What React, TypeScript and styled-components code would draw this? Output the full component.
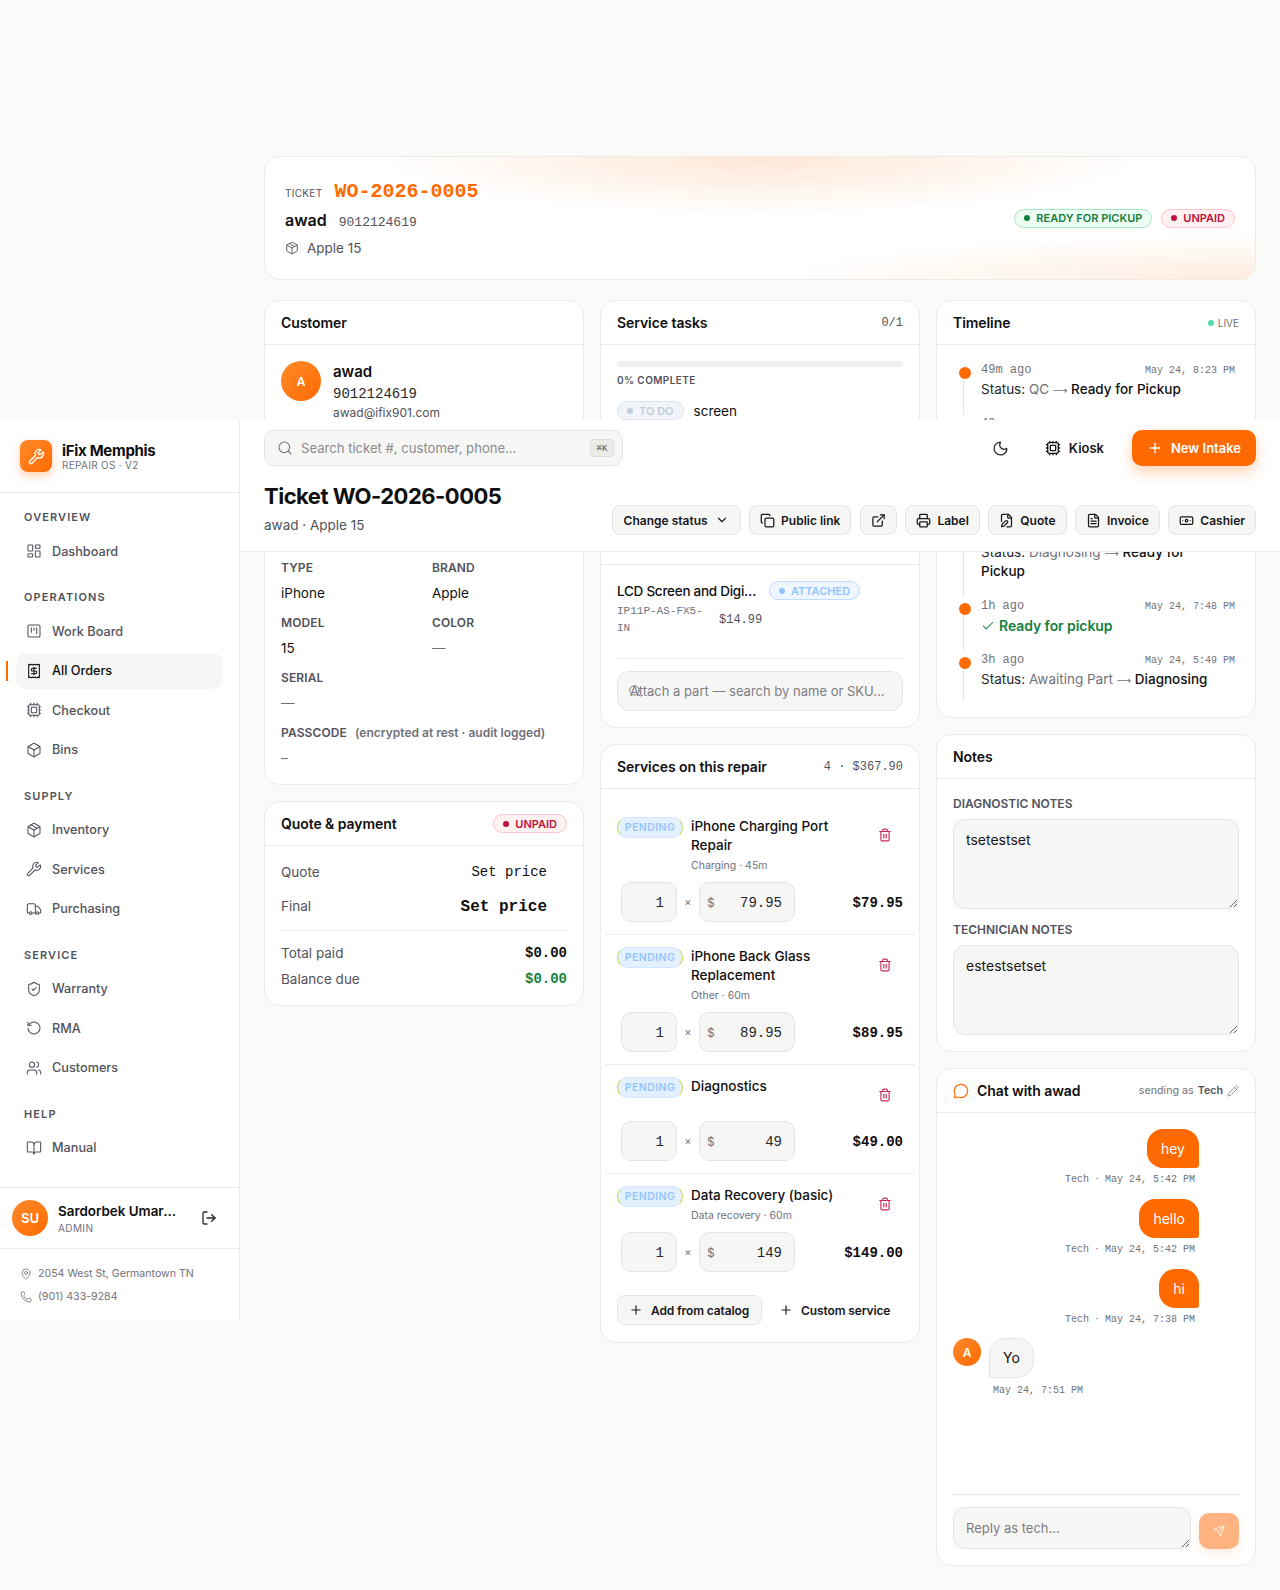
import React from "react";
import styled, { createGlobalStyle } from "styled-components";
import {
  Banknote,
  BookOpen,
  Box,
  Check,
  ChevronDown,
  Copy,
  Cpu,
  ExternalLink,
  FilePen,
  FileText,
  LayoutDashboard,
  LogOut,
  MapPin,
  MessageCircle,
  Moon,
  Package,
  Pencil,
  Phone,
  Plus,
  Printer,
  Receipt,
  RotateCcw,
  Search,
  Send,
  ShieldCheck,
  SquareKanban,
  Trash2,
  Truck,
  Users,
  Wrench,
} from "lucide-react";

const MONO = `"Liberation Mono", monospace`;
const ORANGE = "#ff6a00";

const GlobalStyle = createGlobalStyle`
  * { box-sizing: border-box; }
  html, body { margin: 0; padding: 0; }
  body {
    background: #fafaf8;
    color: #0f0f10;
    font-family: Inter, "Liberation Sans", sans-serif;
    font-size: 13.5px;
  }
`;

const Page = styled.div`
  position: relative;
  width: 1280px;
  height: 1590px;
  overflow: hidden;
`;

/* ---------- sidebar ---------- */

const Sidebar = styled.aside`
  position: absolute;
  top: 420px;
  left: 0;
  width: 240px;
  height: 900px;
  background: #fff;
  border-right: 1px solid #ebebe8;
  display: flex;
  flex-direction: column;
  z-index: 3;
`;

const Brand = styled.div`
  height: 73px;
  flex: none;
  border-bottom: 1px solid #ebebe8;
  display: flex;
  align-items: center;
  gap: 10px;
  padding: 0 20px;
`;

const LogoTile = styled.div`
  width: 32px;
  height: 32px;
  border-radius: 8px;
  background: linear-gradient(135deg, #ff8a2b, ${ORANGE});
  box-shadow: 0 4px 10px rgba(255, 106, 0, 0.3);
  color: #fff;
  display: flex;
  align-items: center;
  justify-content: center;
`;

const BrandName = styled.div`
  font-size: 15px;
  font-weight: 700;
  letter-spacing: -0.02em;
  line-height: 17px;
  margin-top: 2px;
`;

const BrandSub = styled.div`
  font-size: 10px;
  color: #71717a;
  letter-spacing: 0.03em;
  line-height: 13px;
`;

const Nav = styled.nav`
  padding: 16px 16px 0;
  display: flex;
  flex-direction: column;
  gap: 20px;
`;

const NavGroup = styled.div`
  display: flex;
  flex-direction: column;
`;

const NavLabel = styled.div`
  font-size: 11px;
  font-weight: 600;
  line-height: 16px;
  letter-spacing: 0.1em;
  color: #52525b;
  padding-left: 8px;
  margin-bottom: 8px;
`;

const NavItems = styled.div`
  display: flex;
  flex-direction: column;
  gap: 3.5px;
`;

const NavLink = styled.a<{ $active?: boolean }>`
  position: relative;
  height: 36px;
  border-radius: 10px;
  display: flex;
  align-items: center;
  gap: 10px;
  padding-left: 10px;
  font-size: 12.7px;
  font-weight: 500;
  color: ${(p) => (p.$active ? "#0f0f10" : "#52525b")};
  background: ${(p) => (p.$active ? "#f6f6f4" : "transparent")};
  ${(p) =>
    p.$active &&
    `&::before {
      content: "";
      position: absolute;
      left: -10px;
      top: 8px;
      width: 2px;
      height: 20px;
      background: ${ORANGE};
    }`}
`;

const UserRow = styled.div`
  margin-top: auto;
  height: 62px;
  border-top: 1px solid #ebebe8;
  border-bottom: 1px solid #ebebe8;
  display: flex;
  align-items: center;
  padding: 0 12px;
  gap: 10px;
`;

const Avatar = styled.div<{ $size: number; $font: number }>`
  width: ${(p) => p.$size}px;
  height: ${(p) => p.$size}px;
  flex: none;
  border-radius: 50%;
  background: linear-gradient(135deg, #ff8a2b, ${ORANGE});
  color: #fff;
  font-size: ${(p) => p.$font}px;
  font-weight: 600;
  display: flex;
  align-items: center;
  justify-content: center;
`;

const UserText = styled.div`
  width: 120px;
`;

const UserName = styled.div`
  font-size: 13.4px;
  font-weight: 600;
  line-height: 18px;
  margin-top: 1px;
  white-space: nowrap;
  overflow: hidden;
  text-overflow: ellipsis;
`;

const UserRole = styled.div`
  font-size: 10px;
  line-height: 14px;
  color: #71717a;
  letter-spacing: 0.04em;
  margin-top: 1px;
`;

const LogoutBtn = styled.div`
  margin-left: 13px;
  display: flex;
  color: #27272a;
`;

const ShopInfo = styled.div`
  height: 71px;
  flex: none;
  padding: 17px 20px 0;
  display: flex;
  flex-direction: column;
  gap: 7px;
`;

const ShopLine = styled.div`
  display: flex;
  align-items: center;
  gap: 6px;
  font-size: 10.6px;
  line-height: 16px;
  color: #71717a;
`;

/* ---------- sticky top header ---------- */

const Topbar = styled.header`
  position: absolute;
  top: 420px;
  left: 240px;
  right: 0;
  height: 132px;
  background: #fff;
  border-bottom: 1px solid #ebebe8;
  padding: 10px 24px 0;
  z-index: 2;
`;

const TopRow = styled.div`
  display: flex;
  align-items: center;
  justify-content: space-between;
  height: 36px;
  margin-bottom: 15px;
`;

const SearchBox = styled.div`
  width: 359px;
  height: 36px;
  border-radius: 10px;
  background: #f6f6f4;
  border: 1px solid #e4e4e1;
  display: flex;
  align-items: center;
  padding: 0 8px 0 12px;
  gap: 8px;
  color: #71717a;
`;

const SearchText = styled.span`
  flex: 1;
  font-size: 13.1px;
  color: #8a8a91;
`;

const Kbd = styled.span`
  width: 24px;
  height: 18px;
  border-radius: 4px;
  background: #ebebe8;
  border: 1px solid #dddddb;
  font-family: ${MONO};
  font-size: 9px;
  color: #52525b;
  display: flex;
  align-items: center;
  justify-content: center;
`;

const TopActions = styled.div`
  display: flex;
  align-items: center;
  gap: 14px;
`;

const IconGhost = styled.div`
  width: 36px;
  height: 36px;
  display: flex;
  align-items: center;
  justify-content: center;
  color: #27272a;
`;

const GhostBtn = styled.div`
  height: 36px;
  padding: 0 14px 0 12px;
  display: flex;
  align-items: center;
  gap: 8px;
  font-size: 13px;
  font-weight: 600;
  color: #18181b;
`;

const PrimaryBtn = styled.div`
  width: 124px;
  height: 36px;
  border-radius: 10px;
  background: ${ORANGE};
  color: #fff;
  font-size: 13px;
  font-weight: 600;
  display: flex;
  align-items: center;
  justify-content: center;
  gap: 8px;
  box-shadow: 0 6px 14px rgba(255, 106, 0, 0.3);
`;

const TitleRow = styled.div`
  display: flex;
  align-items: flex-end;
  justify-content: space-between;
`;

const PageTitle = styled.h1`
  margin: 0;
  font-size: 22px;
  line-height: 30px;
  font-weight: 700;
  letter-spacing: -0.023em;
`;

const PageSub = styled.div`
  margin-top: 4px;
  line-height: 20px;
  color: #52525b;
`;

const ActionRow = styled.div`
  display: flex;
  gap: 8.5px;
`;

const ActionBtn = styled.div`
  height: 30px;
  padding: 0 10px;
  border-radius: 8px;
  background: #f6f6f4;
  border: 1px solid #e4e4e1;
  display: flex;
  align-items: center;
  gap: 6px;
  font-size: 12px;
  font-weight: 600;
  color: #18181b;
  white-space: nowrap;
`;

const StatusBtn = styled(ActionBtn)`
  padding: 0 11px;
  gap: 7px;
`;

/* ---------- main flow ---------- */

const Main = styled.main`
  padding: 156px 24px 24px 264px;
`;

const Hero = styled.section`
  height: 124px;
  border: 1px solid #ebebe8;
  border-radius: 16px;
  background:
    radial-gradient(380px 58px at 50% 0%, rgba(255, 106, 0, 0.16), transparent),
    radial-gradient(480px 44px at 100% 100%, rgba(255, 106, 0, 0.13), transparent),
    #fff;
  padding: 24px 20px 0;
  display: flex;
  align-items: center;
  justify-content: space-between;
`;

const HeroInfo = styled.div`
  margin-top: -24px;
`;

const HeroTicket = styled.div`
  display: flex;
  align-items: center;
  gap: 12px;
  height: 24px;
`;

const TicketLabel = styled.span`
  font-size: 10px;
  color: #52525b;
  letter-spacing: 0.03em;
  margin-top: 6px;
`;

const TicketNo = styled.span`
  font-family: ${MONO};
  font-size: 20px;
  font-weight: 700;
  color: ${ORANGE};
  margin-top: 2px;
`;

const HeroName = styled.div`
  display: flex;
  align-items: baseline;
  gap: 12px;
  margin-top: 8px;
  height: 24px;
`;

const HeroCustomer = styled.span`
  font-size: 16px;
  font-weight: 600;
`;

const MonoGray = styled.span<{ $size?: number }>`
  font-family: ${MONO};
  font-size: ${(p) => p.$size ?? 13}px;
  color: #52525b;
`;

const HeroDevice = styled.div`
  display: flex;
  align-items: center;
  gap: 8px;
  margin-top: 4px;
  color: #52525b;
  height: 20px;
`;

const Badges = styled.div`
  display: flex;
  gap: 9px;
  margin-top: -24px;
`;

const tones = {
  green: { bg: "#ecfdf3", line: "#a7e8c4", ink: "#15803d" },
  red: { bg: "#fff1f2", line: "#fdc3cf", ink: "#be123c" },
  blue: { bg: "#eff6ff", line: "#bfdbfe", ink: "#93c5fd" },
  slate: { bg: "#f1f5f9", line: "#dbe3ec", ink: "#c3ccd8" },
};

const Chip = styled.span<{ $tone: keyof typeof tones }>`
  height: 19px;
  flex: none;
  padding: 0 9px;
  border-radius: 999px;
  background: ${(p) => tones[p.$tone].bg};
  border: 1px solid ${(p) => tones[p.$tone].line};
  color: ${(p) => tones[p.$tone].ink};
  font-size: 11px;
  font-weight: 600;
  display: inline-flex;
  align-items: center;
  gap: 6px;
  white-space: nowrap;
  &::before {
    content: "";
    width: 6px;
    height: 6px;
    border-radius: 50%;
    background: currentColor;
  }
`;

const Columns = styled.div`
  margin-top: 20px;
  display: grid;
  grid-template-columns: repeat(3, 320px);
  gap: 16px;
  align-items: start;
`;

const Column = styled.div`
  display: flex;
  flex-direction: column;
  gap: 16px;
`;

const Card = styled.section`
  background: #fff;
  border: 1px solid #ebebe8;
  border-radius: 16px;
`;

const CardHead = styled.div`
  height: 44px;
  padding: 0 16px;
  border-bottom: 1px solid #ebebe8;
  display: flex;
  align-items: center;
  justify-content: space-between;
`;

const CardTitle = styled.h2`
  margin: 0;
  font-size: 14px;
  font-weight: 600;
  letter-spacing: -0.005em;
  display: flex;
  align-items: center;
  gap: 8px;
`;

const CardBody = styled.div`
  padding: 16px;
`;

const CustomerTop = styled.div`
  display: flex;
  gap: 12px;
  min-height: 199px;
  align-items: flex-start;
`;

const CustomerName = styled.div`
  font-size: 15px;
  font-weight: 600;
  line-height: 22px;
`;

const CustomerPhone = styled.div`
  font-family: ${MONO};
  font-size: 14px;
  line-height: 22px;
  color: #27272a;
`;

const CustomerMail = styled.div`
  font-size: 12px;
  line-height: 16px;
  color: #52525b;
`;

const DeviceGrid = styled.dl`
  margin: 0 0 1px;
  display: grid;
  grid-template-columns: 1fr 1fr;
  column-gap: 16px;
  row-gap: 13px;
`;

const DeviceCell = styled.div<{ $wide?: boolean }>`
  grid-column: ${(p) => (p.$wide ? "1 / -1" : "auto")};
`;

const FieldLabel = styled.dt`
  font-size: 12px;
  font-weight: 600;
  line-height: 16px;
  color: #52525b;
  letter-spacing: 0.01em;
`;

const LabelHint = styled.span`
  margin-left: 8px;
  color: #71717a;
  letter-spacing: 0;
`;

const FieldValue = styled.dd<{ $muted?: boolean }>`
  margin: 8px 0 0;
  line-height: 18px;
  color: ${(p) => (p.$muted ? "#71717a" : "#0f0f10")};
`;

const PayRow = styled.div<{ $gap?: number }>`
  display: flex;
  align-items: center;
  justify-content: space-between;
  line-height: 20px;
  margin-bottom: ${(p) => p.$gap ?? 0}px;
  color: #52525b;
`;

const PriceLink = styled.span<{ $big?: boolean }>`
  font-family: ${MONO};
  font-size: ${(p) => (p.$big ? 16 : 14)}px;
  font-weight: ${(p) => (p.$big ? 700 : 400)};
  line-height: ${(p) => (p.$big ? 18 : 20)}px;
  color: #0f0f10;
  padding-right: 20px;
  padding-top: ${(p) => (p.$big ? 2 : 0)}px;
`;

const PayDivider = styled.hr`
  border: 0;
  border-top: 1px solid #ebebe8;
  margin: 14px 0 12px;
`;

const PayAmount = styled.span<{ $green?: boolean }>`
  font-family: ${MONO};
  font-size: 14px;
  font-weight: 700;
  color: ${(p) => (p.$green ? "#15803d" : "#0f0f10")};
`;

const TaskSection = styled.div`
  min-height: 220px;
  padding: 16px;
  border-bottom: 1px solid #ebebe8;
`;

const Progress = styled.div`
  height: 6px;
  border-radius: 3px;
  background: #efefed;
`;

const ProgressText = styled.div`
  margin-top: 6px;
  font-size: 10px;
  font-weight: 600;
  line-height: 14px;
  letter-spacing: 0.04em;
  color: #52525b;
`;

const TaskRow = styled.div`
  margin-top: 14px;
  display: flex;
  align-items: center;
  gap: 10px;
`;

const PartSection = styled.div`
  padding: 16px 16px 16px;
`;

const PartInfo = styled.div`
  padding-bottom: 21px;
  border-bottom: 1px solid #ebebe8;
`;

const PartTop = styled.div`
  display: flex;
  align-items: center;
  gap: 10px;
`;

const PartName = styled.div`
  width: 142px;
  font-weight: 500;
  letter-spacing: -0.02em;
  white-space: nowrap;
  overflow: hidden;
  text-overflow: ellipsis;
`;

const PartMeta = styled.div`
  display: flex;
  align-items: center;
  gap: 12px;
  margin-top: 3px;
`;

const PartSku = styled.div`
  width: 90px;
  font-family: ${MONO};
  font-size: 11px;
  line-height: 17px;
  color: #71717a;
`;

const PartSearch = styled.div`
  position: relative;
  margin-top: 12px;
  color: #71717a;
  svg {
    position: absolute;
    left: 11px;
    top: 13px;
  }
`;

const TextInput = styled.input`
  width: 100%;
  height: 40px;
  padding: 0 12px;
  border-radius: 12px;
  border: 1px solid #e4e4e1;
  background: #f6f6f4;
  font: inherit;
  font-size: 13px;
  text-overflow: ellipsis;
  &::placeholder {
    color: #7d7d85;
    opacity: 1;
  }
`;

const ListHeadMeta = styled.span`
  font-family: ${MONO};
  font-size: 12px;
  color: #52525b;
  white-space: pre;
`;

const ServiceList = styled.div`
  padding: 16px 4px 0;
`;

const ServiceRow = styled.div`
  padding: 12px 12px;
  border-bottom: 1px solid #ebebe8;
  &:last-child {
    border-bottom: 0;
  }
`;

const ServiceHead = styled.div`
  display: flex;
  align-items: flex-start;
  gap: 8px;
`;

const PendingPill = styled.span`
  flex: none;
  width: 66px;
  height: 21px;
  border-radius: 11px;
  background: #e3f0ff;
  border: 1px solid;
  border-color: #d3e5ff #c3d94e;
  color: #93c5fd;
  font-size: 10.5px;
  font-weight: 600;
  letter-spacing: 0.04em;
  display: flex;
  align-items: center;
  justify-content: center;
`;

const ServiceText = styled.div`
  flex: 1;
`;

const ServiceName = styled.div`
  font-weight: 500;
  line-height: 19px;
`;

const ServiceMeta = styled.div`
  margin-top: 3px;
  font-size: 10.5px;
  line-height: 16px;
  color: #71717a;
`;

const TrashBtn = styled.div`
  flex: none;
  width: 28px;
  height: 28px;
  margin: 4px 4px 4px 0;
  display: flex;
  align-items: center;
  justify-content: center;
  color: #c92a5a;
`;

const PriceLine = styled.div`
  margin-top: 8px;
  padding: 0 0 0 4px;
  display: flex;
  align-items: center;
`;

const QtyField = styled.div`
  width: 56px;
  height: 40px;
  border-radius: 10px;
  background: #f6f6f4;
  border: 1px solid #e4e4e1;
  font-family: ${MONO};
  font-size: 14px;
  color: #27272a;
  display: flex;
  align-items: center;
  justify-content: flex-end;
  padding: 2px 12px 0 0;
`;

const Times = styled.span`
  width: 22px;
  text-align: center;
  font-size: 11px;
  color: #71717a;
`;

const RateField = styled(QtyField)`
  width: 96px;
  justify-content: space-between;
  padding-left: 7px;
`;

const Dollar = styled.span`
  font-size: 12px;
  color: #71717a;
  font-family: Inter, sans-serif;
  margin-top: -2px;
`;

const LineTotal = styled.span`
  margin-left: auto;
  padding-top: 2px;
  font-family: ${MONO};
  font-size: 14px;
  font-weight: 700;
`;

const ServiceActions = styled.div`
  display: flex;
  gap: 5px;
  padding: 0 16px 17px;
  margin-top: 11px;
`;

const AddBtn = styled(ActionBtn)<{ $ghost?: boolean }>`
  padding: 0 12px 0 11px;
  gap: 8px;
  letter-spacing: -0.01em;
  background: ${(p) => (p.$ghost ? "transparent" : "#f6f6f4")};
  border-color: ${(p) => (p.$ghost ? "transparent" : "#e4e4e1")};
`;

const LiveTag = styled.span`
  display: flex;
  align-items: center;
  gap: 4px;
  font-size: 10px;
  color: #71717a;
  &::before {
    content: "";
    width: 6px;
    height: 6px;
    border-radius: 50%;
    background: #4fdcae;
  }
`;

const TimelineItem = styled.div<{ $height?: number }>`
  display: flex;
  gap: 10px;
  min-height: ${(p) => p.$height ?? 0}px;
`;

const Rail = styled.div`
  flex: none;
  width: 12px;
  margin-left: 6px;
  padding-top: 6px;
  display: flex;
  flex-direction: column;
`;

const RailDot = styled.span`
  width: 12px;
  height: 12px;
  border-radius: 50%;
  background: ${ORANGE};
  flex: none;
`;

const RailLine = styled.span`
  flex: 1;
  width: 1px;
  margin-left: 4px;
  background: #e4e4e1;
`;

const EventBody = styled.div<{ $last?: boolean }>`
  flex: 1;
  margin-right: 4px;
  padding-top: 1px;
  padding-bottom: ${(p) => (p.$last ? 12 : 16)}px;
`;

const EventTop = styled.div`
  display: flex;
  align-items: center;
  justify-content: space-between;
  height: 16px;
`;

const EventAgo = styled.span`
  font-family: ${MONO};
  font-size: 12px;
  color: #71717a;
`;

const EventDate = styled.span`
  font-family: ${MONO};
  font-size: 10px;
  color: #71717a;
`;

const EventText = styled.div`
  margin-top: 2px;
  max-width: 248px;
  line-height: 19px;
  color: #27272a;
`;

const Faded = styled.span`
  color: #71717a;
`;

const Arrow = styled.span`
  font-family: "DejaVu Sans", sans-serif;
  font-size: 10px;
  line-height: 10px;
  color: #71717a;
`;

const Strong = styled.span`
  color: #0f0f10;
  font-weight: 500;
`;

const EventOk = styled.div`
  margin-top: 2px;
  display: flex;
  align-items: center;
  gap: 4px;
  line-height: 19px;
  font-size: 14px;
  font-weight: 600;
  letter-spacing: -0.005em;
  color: #15803d;
`;

const NoteLabel = styled.label`
  display: block;
  font-size: 12px;
  font-weight: 600;
  line-height: 16px;
  color: #52525b;
  margin-bottom: 7px;
`;

const NoteArea = styled.textarea<{ $h?: number; $size?: number }>`
  display: block;
  width: 100%;
  height: ${(p) => p.$h ?? 90}px;
  padding: 10px 12px;
  border-radius: 12px;
  border: 1px solid #e4e4e1;
  background: #f6f6f4;
  color: #18181b;
  font: inherit;
  font-size: ${(p) => p.$size ?? 14}px;
  line-height: 20px;
  resize: vertical;
  &::placeholder {
    color: #7d7d85;
    opacity: 1;
  }
`;

const NotesBody = styled(CardBody)`
  padding-top: 17px;
`;

const NoteBlock = styled.div`
  & + & {
    margin-top: 13px;
  }
`;

const SendingAs = styled.span`
  display: flex;
  align-items: center;
  gap: 4px;
  font-size: 10.7px;
  color: #71717a;
  b {
    font-weight: 600;
    color: #52525b;
  }
`;

const Thread = styled.div`
  height: 381px;
  padding: 16px 16px 0;
  display: flex;
  flex-direction: column;
`;

const MineMsg = styled.div`
  display: flex;
  flex-direction: column;
  align-items: flex-end;
  padding-right: 40px;
  margin-bottom: 12px;
`;

const MineBubble = styled.div`
  padding: 10px 14px;
  font-size: 14px;
  line-height: 19px;
  background: ${ORANGE};
  color: #fff;
  border-radius: 16px 16px 3px 16px;
`;

const MsgMeta = styled.div`
  margin-top: 5px;
  padding-right: 4px;
  font-family: ${MONO};
  font-size: 10px;
  line-height: 14px;
  height: 14px;
  color: #71717a;
  white-space: pre;
`;

const MetaDot = styled.span`
  display: inline-block;
  width: 16px;
  text-align: center;
  line-height: 10px;
  font-family: Inter, sans-serif;
`;

const TheirMsg = styled.div`
  display: flex;
  gap: 8px;
  margin-top: -1px;
`;

const TheirBubble = styled.div`
  padding: 10px 13px;
  font-size: 14px;
  line-height: 18px;
  background: #f6f6f4;
  border: 1px solid #e4e4e1;
  border-radius: 16px 16px 16px 3px;
  width: fit-content;
`;

const TheirMeta = styled(MsgMeta)`
  margin-top: 6px;
  padding: 0 0 0 4px;
`;

const Composer = styled.div`
  margin: 0 16px;
  padding: 12px 0 16px;
  border-top: 1px solid #e4e4e1;
  display: flex;
  align-items: flex-end;
  gap: 8px;
`;

const SendBtn = styled.div`
  width: 40px;
  height: 36px;
  flex: none;
  border-radius: 10px;
  background: #ffb380;
  color: #fff;
  display: flex;
  align-items: center;
  justify-content: center;
  box-shadow: 0 4px 10px rgba(255, 106, 0, 0.12);
`;

const navGroups = [
  { label: "OVERVIEW", items: [{ name: "Dashboard", icon: LayoutDashboard }] },
  {
    label: "OPERATIONS",
    items: [
      { name: "Work Board", icon: SquareKanban },
      { name: "All Orders", icon: Receipt, active: true },
      { name: "Checkout", icon: Cpu },
      { name: "Bins", icon: Box },
    ],
  },
  {
    label: "SUPPLY",
    items: [
      { name: "Inventory", icon: Package },
      { name: "Services", icon: Wrench },
      { name: "Purchasing", icon: Truck },
    ],
  },
  {
    label: "SERVICE",
    items: [
      { name: "Warranty", icon: ShieldCheck },
      { name: "RMA", icon: RotateCcw },
      { name: "Customers", icon: Users },
    ],
  },
  { label: "HELP", items: [{ name: "Manual", icon: BookOpen }] },
];

const services = [
  { name: "iPhone Charging Port Repair", meta: "Charging · 45m", qty: 1, rate: "79.95", total: "$79.95" },
  { name: "iPhone Back Glass Replacement", meta: "Other · 60m", qty: 1, rate: "89.95", total: "$89.95" },
  { name: "Diagnostics", meta: "", qty: 1, rate: "49", total: "$49.00" },
  { name: "Data Recovery (basic)", meta: "Data recovery · 60m", qty: 1, rate: "149", total: "$149.00" },
];

const myMessages = [
  { text: "hey", date: "May 24, 5:42 PM" },
  { text: "hello", date: "May 24, 5:42 PM" },
  { text: "hi", date: "May 24, 7:38 PM" },
];

export default function App() {
  return (
    <Page>
      <GlobalStyle />

      <Sidebar>
        <Brand>
          <LogoTile>
            <Wrench size={17} strokeWidth={2} />
          </LogoTile>
          <div>
            <BrandName>iFix Memphis</BrandName>
            <BrandSub>REPAIR OS · V2</BrandSub>
          </div>
        </Brand>
        <Nav>
          {navGroups.map((group) => (
            <NavGroup key={group.label}>
              <NavLabel>{group.label}</NavLabel>
              <NavItems>
                {group.items.map((item: any) => (
                  <NavLink key={item.name} $active={item.active}>
                    <item.icon size={16} strokeWidth={1.6} />
                    {item.name}
                  </NavLink>
                ))}
              </NavItems>
            </NavGroup>
          ))}
        </Nav>
        <UserRow>
          <Avatar $size={36} $font={13}>SU</Avatar>
          <UserText>
            <UserName>Sardorbek Umarov</UserName>
            <UserRole>ADMIN</UserRole>
          </UserText>
          <LogoutBtn>
            <LogOut size={16} />
          </LogoutBtn>
        </UserRow>
        <ShopInfo>
          <ShopLine>
            <MapPin size={12} strokeWidth={1.6} />
            2054 West St, Germantown TN
          </ShopLine>
          <ShopLine>
            <Phone size={12} strokeWidth={1.6} />
            (901) 433-9284
          </ShopLine>
        </ShopInfo>
      </Sidebar>

      <Topbar>
        <TopRow>
          <SearchBox>
            <Search size={16} strokeWidth={1.6} />
            <SearchText>Search ticket #, customer, phone…</SearchText>
            <Kbd>⌘K</Kbd>
          </SearchBox>
          <TopActions>
            <IconGhost>
              <Moon size={17} strokeWidth={1.8} />
            </IconGhost>
            <GhostBtn>
              <Cpu size={16} />
              Kiosk
            </GhostBtn>
            <PrimaryBtn>
              <Plus size={16} />
              New Intake
            </PrimaryBtn>
          </TopActions>
        </TopRow>
        <TitleRow>
          <div>
            <PageTitle>Ticket WO-2026-0005</PageTitle>
            <PageSub>awad · Apple 15</PageSub>
          </div>
          <ActionRow>
            <StatusBtn>
              Change status <ChevronDown size={14} />
            </StatusBtn>
            <ActionBtn>
              <Copy size={15} />
              Public link
            </ActionBtn>
            <ActionBtn>
              <ExternalLink size={15} />
            </ActionBtn>
            <ActionBtn>
              <Printer size={15} />
              Label
            </ActionBtn>
            <ActionBtn>
              <FilePen size={15} />
              Quote
            </ActionBtn>
            <ActionBtn>
              <FileText size={15} />
              Invoice
            </ActionBtn>
            <ActionBtn>
              <Banknote size={15} />
              Cashier
            </ActionBtn>
          </ActionRow>
        </TitleRow>
      </Topbar>

      <Main>
        <Hero>
          <HeroInfo>
            <HeroTicket>
              <TicketLabel>TICKET</TicketLabel>
              <TicketNo>WO-2026-0005</TicketNo>
            </HeroTicket>
            <HeroName>
              <HeroCustomer>awad</HeroCustomer>
              <MonoGray>9012124619</MonoGray>
            </HeroName>
            <HeroDevice>
              <Package size={14} strokeWidth={1.6} />
              Apple 15
            </HeroDevice>
          </HeroInfo>
          <Badges>
            <Chip $tone="green">READY FOR PICKUP</Chip>
            <Chip $tone="red">UNPAID</Chip>
          </Badges>
        </Hero>

        <Columns>
          <Column>
            <Card>
              <CardHead>
                <CardTitle>Customer</CardTitle>
              </CardHead>
              <CardBody>
                <CustomerTop>
                  <Avatar $size={40} $font={12}>A</Avatar>
                  <div>
                    <CustomerName>awad</CustomerName>
                    <CustomerPhone>9012124619</CustomerPhone>
                    <CustomerMail>awad@ifix901.com</CustomerMail>
                  </div>
                </CustomerTop>
                <DeviceGrid>
                  <DeviceCell>
                    <FieldLabel>TYPE</FieldLabel>
                    <FieldValue>iPhone</FieldValue>
                  </DeviceCell>
                  <DeviceCell>
                    <FieldLabel>BRAND</FieldLabel>
                    <FieldValue>Apple</FieldValue>
                  </DeviceCell>
                  <DeviceCell>
                    <FieldLabel>MODEL</FieldLabel>
                    <FieldValue>15</FieldValue>
                  </DeviceCell>
                  <DeviceCell>
                    <FieldLabel>COLOR</FieldLabel>
                    <FieldValue $muted>—</FieldValue>
                  </DeviceCell>
                  <DeviceCell $wide>
                    <FieldLabel>SERIAL</FieldLabel>
                    <FieldValue $muted>—</FieldValue>
                  </DeviceCell>
                  <DeviceCell $wide>
                    <FieldLabel>
                      PASSCODE<LabelHint>(encrypted at rest · audit logged)</LabelHint>
                    </FieldLabel>
                    <FieldValue $muted>–</FieldValue>
                  </DeviceCell>
                </DeviceGrid>
              </CardBody>
            </Card>

            <Card>
              <CardHead>
                <CardTitle>Quote &amp; payment</CardTitle>
                <Chip $tone="red">UNPAID</Chip>
              </CardHead>
              <CardBody>
                <PayRow $gap={14}>
                  Quote
                  <PriceLink>Set price</PriceLink>
                </PayRow>
                <PayRow>
                  Final
                  <PriceLink $big>Set price</PriceLink>
                </PayRow>
                <PayDivider />
                <PayRow $gap={6}>
                  Total paid
                  <PayAmount>$0.00</PayAmount>
                </PayRow>
                <PayRow>
                  Balance due
                  <PayAmount $green>$0.00</PayAmount>
                </PayRow>
              </CardBody>
            </Card>
          </Column>

          <Column>
            <Card>
              <CardHead>
                <CardTitle>Service tasks</CardTitle>
                <ListHeadMeta>0/1</ListHeadMeta>
              </CardHead>
              <TaskSection>
                <Progress />
                <ProgressText>0% COMPLETE</ProgressText>
                <TaskRow>
                  <Chip $tone="slate">TO DO</Chip>
                  screen
                </TaskRow>
              </TaskSection>
              <PartSection>
                <PartInfo>
                  <PartTop>
                    <PartName>LCD Screen and Digitizer</PartName>
                    <Chip $tone="blue">ATTACHED</Chip>
                  </PartTop>
                  <PartMeta>
                    <PartSku>IP11P-AS-FX5-IN</PartSku>
                    <MonoGray $size={12}>$14.99</MonoGray>
                  </PartMeta>
                </PartInfo>
                <PartSearch>
                  <TextInput placeholder="Attach a part — search by name or SKU…" />
                  <Search size={14} strokeWidth={1.6} />
                </PartSearch>
              </PartSection>
            </Card>

            <Card>
              <CardHead>
                <CardTitle>Services on this repair</CardTitle>
                <ListHeadMeta>4 · $367.90</ListHeadMeta>
              </CardHead>
              <ServiceList>
                {services.map((s) => (
                  <ServiceRow key={s.name}>
                    <ServiceHead>
                      <PendingPill>PENDING</PendingPill>
                      <ServiceText>
                        <ServiceName>{s.name}</ServiceName>
                        {s.meta && <ServiceMeta>{s.meta}</ServiceMeta>}
                      </ServiceText>
                      <TrashBtn>
                        <Trash2 size={14} />
                      </TrashBtn>
                    </ServiceHead>
                    <PriceLine>
                      <QtyField>{s.qty}</QtyField>
                      <Times>×</Times>
                      <RateField>
                        <Dollar>$</Dollar>
                        {s.rate}
                      </RateField>
                      <LineTotal>{s.total}</LineTotal>
                    </PriceLine>
                  </ServiceRow>
                ))}
              </ServiceList>
              <ServiceActions>
                <AddBtn>
                  <Plus size={14} />
                  Add from catalog
                </AddBtn>
                <AddBtn $ghost>
                  <Plus size={14} />
                  Custom service
                </AddBtn>
              </ServiceActions>
            </Card>
          </Column>

          <Column>
            <Card>
              <CardHead>
                <CardTitle>Timeline</CardTitle>
                <LiveTag>LIVE</LiveTag>
              </CardHead>
              <CardBody>
                <TimelineItem>
                  <Rail>
                    <RailDot />
                    <RailLine />
                  </Rail>
                  <EventBody>
                    <EventTop>
                      <EventAgo>49m ago</EventAgo>
                      <EventDate>May 24, 8:23 PM</EventDate>
                    </EventTop>
                    <EventText>
                      Status: <Faded>QC</Faded> <Arrow>⟶</Arrow> <Strong>Ready for Pickup</Strong>
                    </EventText>
                  </EventBody>
                </TimelineItem>
                <TimelineItem $height={109}>
                  <Rail>
                    <RailDot />
                    <RailLine />
                  </Rail>
                  <EventBody>
                    <EventTop>
                      <EventAgo>49m ago</EventAgo>
                      <EventDate>May 24, 8:23 PM</EventDate>
                    </EventTop>
                  </EventBody>
                </TimelineItem>
                <TimelineItem>
                  <Rail>
                    <RailDot />
                    <RailLine />
                  </Rail>
                  <EventBody>
                    <EventTop>
                      <EventAgo>1h ago</EventAgo>
                      <EventDate>May 24, 7:50 PM</EventDate>
                    </EventTop>
                    <EventText>
                      Status: <Faded>Diagnosing</Faded> <Arrow>⟶</Arrow> <Strong>Ready for Pickup</Strong>
                    </EventText>
                  </EventBody>
                </TimelineItem>
                <TimelineItem>
                  <Rail>
                    <RailDot />
                    <RailLine />
                  </Rail>
                  <EventBody>
                    <EventTop>
                      <EventAgo>1h ago</EventAgo>
                      <EventDate>May 24, 7:48 PM</EventDate>
                    </EventTop>
                    <EventOk>
                      <Check size={14} strokeWidth={1.8} />
                      Ready for pickup
                    </EventOk>
                  </EventBody>
                </TimelineItem>
                <TimelineItem>
                  <Rail>
                    <RailDot />
                    <RailLine />
                  </Rail>
                  <EventBody $last>
                    <EventTop>
                      <EventAgo>3h ago</EventAgo>
                      <EventDate>May 24, 5:49 PM</EventDate>
                    </EventTop>
                    <EventText>
                      Status: <Faded>Awaiting Part</Faded> <Arrow>⟶</Arrow> <Strong>Diagnosing</Strong>
                    </EventText>
                  </EventBody>
                </TimelineItem>
              </CardBody>
            </Card>

            <Card>
              <CardHead>
                <CardTitle>Notes</CardTitle>
              </CardHead>
              <NotesBody>
                <NoteBlock>
                  <NoteLabel>DIAGNOSTIC NOTES</NoteLabel>
                  <NoteArea defaultValue="tsetestset" />
                </NoteBlock>
                <NoteBlock>
                  <NoteLabel>TECHNICIAN NOTES</NoteLabel>
                  <NoteArea defaultValue="estestsetset" />
                </NoteBlock>
              </NotesBody>
            </Card>

            <Card>
              <CardHead>
                <CardTitle>
                  <MessageCircle size={16} color={ORANGE} strokeWidth={1.8} />
                  Chat with awad
                </CardTitle>
                <SendingAs>
                  sending as <b>Tech</b>
                  <Pencil size={12} strokeWidth={1.4} />
                </SendingAs>
              </CardHead>
              <Thread>
                {myMessages.map((m, i) => (
                  <MineMsg key={i}>
                    <MineBubble>{m.text}</MineBubble>
                    <MsgMeta>
                      Tech<MetaDot>·</MetaDot>
                      {m.date}
                    </MsgMeta>
                  </MineMsg>
                ))}
                <TheirMsg>
                  <Avatar $size={28} $font={12}>A</Avatar>
                  <div>
                    <TheirBubble>Yo</TheirBubble>
                    <TheirMeta>May 24, 7:51 PM</TheirMeta>
                  </div>
                </TheirMsg>
              </Thread>
              <Composer>
                <NoteArea $h={42} $size={13} placeholder="Reply as tech…" />
                <SendBtn>
                  <Send size={12} strokeWidth={1.6} />
                </SendBtn>
              </Composer>
            </Card>
          </Column>
        </Columns>
      </Main>
    </Page>
  );
}
